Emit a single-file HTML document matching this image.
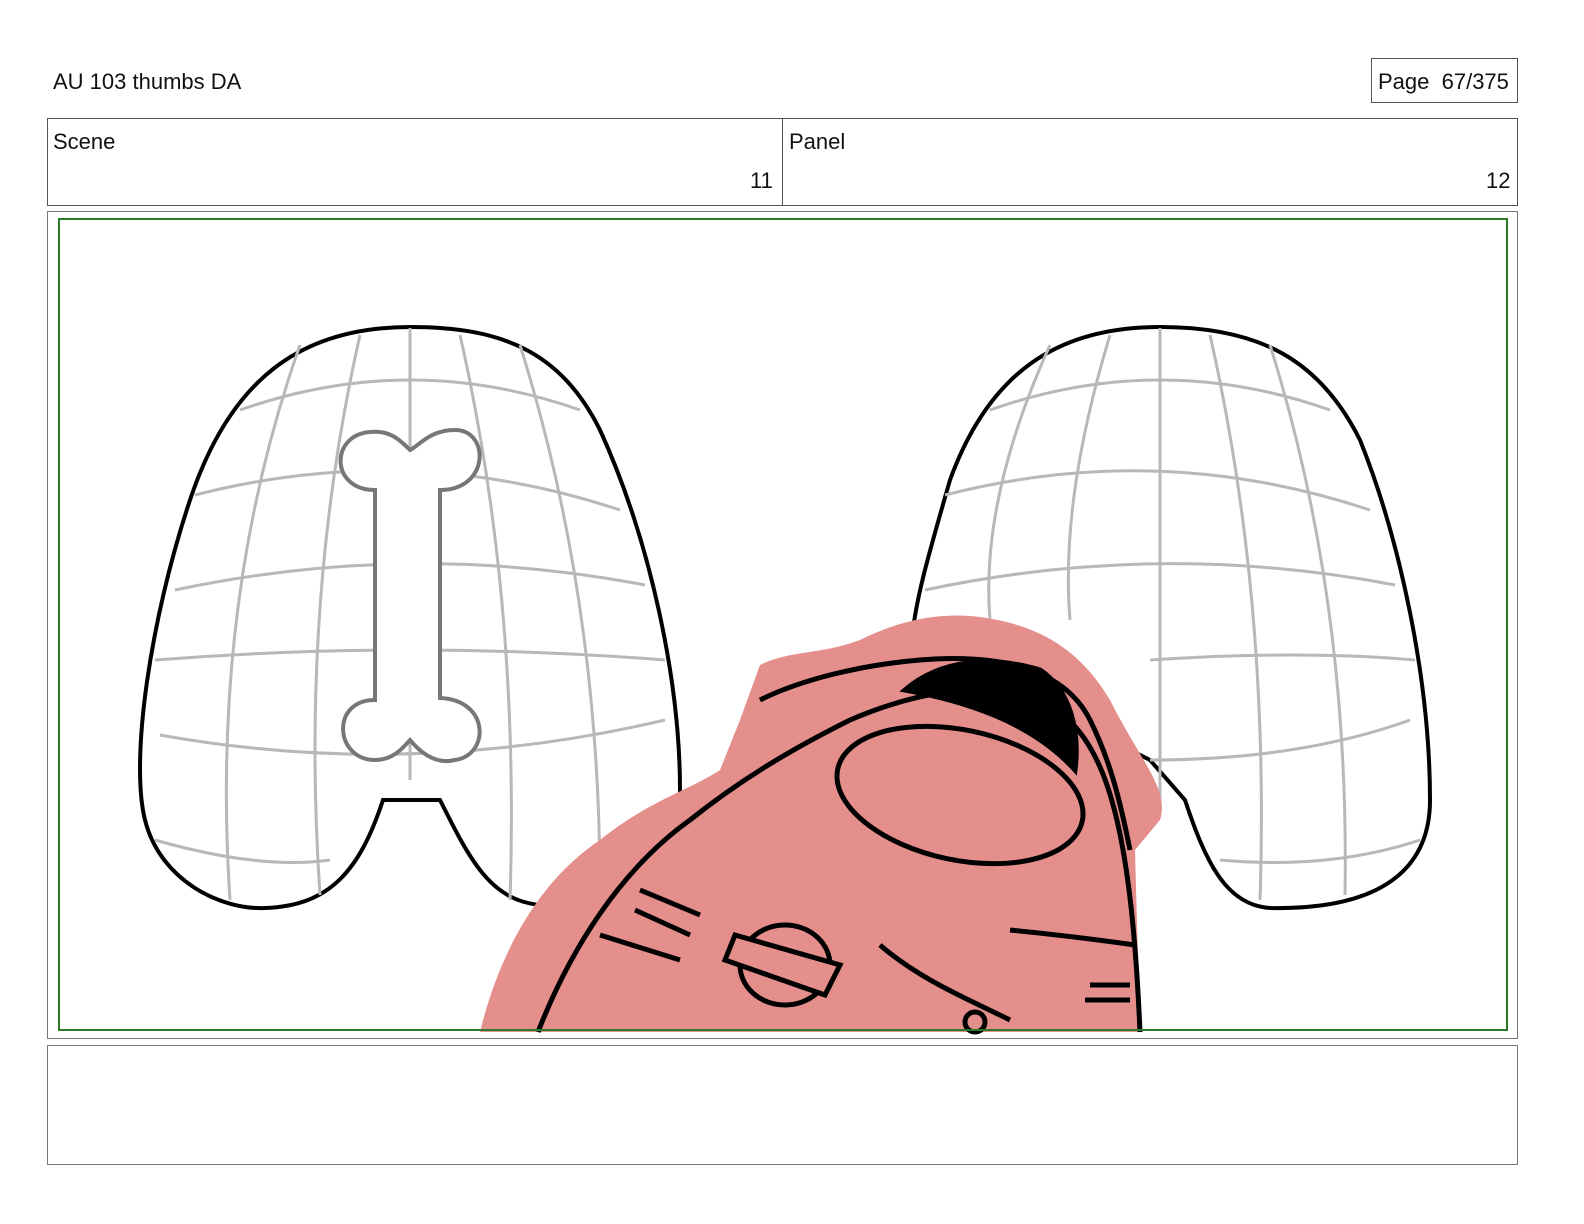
<!DOCTYPE html>
<html style="overflow:hidden"><head><style>
html,body{margin:0;padding:0}
body{width:1584px;height:1224px;background:#fff;font-family:"Liberation Sans",sans-serif;position:relative;overflow:hidden}
.a{position:absolute;box-sizing:border-box}
.t{font-size:22px;color:#111}
</style></head><body>
<div class="a t" style="left:53px;top:69px">AU 103 thumbs DA</div>
<div class="a" style="left:1371px;top:58px;width:147px;height:45px;border:1px solid #555"></div>
<div class="a t" style="left:1378px;top:69px">Page&nbsp; 67/375</div>
<div class="a" style="left:47px;top:118px;width:1471px;height:88px;border:1px solid #555"></div>
<div class="a" style="left:782px;top:118px;width:1px;height:88px;background:#555"></div>
<div class="a t" style="left:53px;top:129px">Scene</div>
<div class="a t" style="left:750px;top:168px">11</div>
<div class="a t" style="left:789px;top:129px">Panel</div>
<div class="a t" style="left:1486px;top:168px">12</div>
<div class="a" style="left:47px;top:211px;width:1471px;height:828px;border:1px solid #777"></div>
<div class="a" style="left:47px;top:1045px;width:1471px;height:120px;border:1px solid #777"></div>
<svg class="a" style="left:0;top:0" width="1584" height="1224">
<g fill="#fff" stroke="#000" stroke-width="4">
<path d="M410 327 C300 327 230 380 190 500 C150 620 130 760 145 820 C160 880 220 910 265 908 C330 906 360 870 383 800 L440 800 C470 860 490 900 540 905 C610 910 680 860 680 790 C680 680 650 540 600 430 C560 350 500 327 410 327Z"/>
<path d="M1160 327 C1060 327 990 370 950 480 C930 550 915 600 912 640 L1150 760 L1185 800 C1205 860 1225 905 1270 908 C1380 910 1430 870 1430 800 C1430 680 1400 540 1360 440 C1320 360 1260 327 1160 327Z"/>
</g>
<g stroke="#b8b8b8" stroke-width="3" fill="none">
<path d="M240 410 Q410 350 580 410 M195 495 Q410 440 620 510 M175 590 Q410 540 645 585 M155 660 Q410 640 665 660 M160 735 Q410 780 665 720 M155 840 Q260 870 330 860"/>
<path d="M300 345 Q210 600 230 900 M360 335 Q300 600 320 895 M410 328 L410 780 M460 335 Q520 600 510 900 M520 345 Q600 600 600 890"/>
<path d="M990 410 Q1160 350 1330 410 M945 495 Q1160 440 1370 510 M925 590 Q1160 540 1395 585 M1150 660 Q1300 650 1415 660 M1150 760 Q1300 760 1410 720 M1220 860 Q1330 870 1420 840"/>
<path d="M1050 345 Q980 500 990 620 M1110 335 Q1060 500 1070 620 M1160 328 L1160 800 M1210 335 Q1270 600 1260 900 M1270 345 Q1350 600 1345 895"/>
</g>
<path d="M375 490 L375 700 C330 700 335 760 375 760 C395 760 405 745 410 740 C420 752 435 765 455 760 C490 755 490 700 440 698 L440 490 C490 490 490 430 455 430 C430 430 420 445 410 450 C400 440 390 430 370 432 C330 435 330 490 375 490Z" fill="#fff" stroke="#777" stroke-width="4"/>
<path d="M480 1032 C500 950 540 880 600 840 C650 800 690 790 720 770 L740 720 L760 665 C790 650 820 655 860 640 C900 620 940 612 980 617 C1040 625 1080 650 1110 700 C1140 760 1170 790 1160 820 L1135 850 L1140 1032Z" fill="#e58f8d" stroke="none"/>
<g stroke="#000" stroke-width="5" fill="none">
<path d="M538 1032 C570 950 620 870 690 820 C740 780 790 750 850 720 C920 690 990 680 1040 700 C1100 730 1130 800 1140 1032"/>
<path d="M760 700 C800 680 860 665 920 660 C980 655 1060 660 1090 720 C1110 760 1120 800 1130 850"/>
<ellipse cx="960" cy="795" rx="125" ry="65" transform="rotate(12 960 795)"/>
<path d="M905 690 C940 660 990 655 1040 670 C1070 690 1080 730 1075 770 C1030 720 960 700 905 690Z" fill="#000"/>
<path d="M640 890 L700 915 M635 910 L690 935 M600 935 L680 960 M1010 930 C1060 935 1100 940 1135 945 M1090 985 L1130 985 M1085 1000 L1130 1000 M880 945 C920 980 970 1000 1010 1020"/>
<ellipse cx="785" cy="965" rx="45" ry="40"/>
<path d="M735 935 L840 965 L825 995 L725 960Z" fill="#e58f8d"/>
<ellipse cx="975" cy="1022" rx="10" ry="10"/>
</g>
<rect x="59" y="219" width="1448" height="811" fill="none" stroke="#2a7a2a" stroke-width="2"/>
</svg>
</body></html>
